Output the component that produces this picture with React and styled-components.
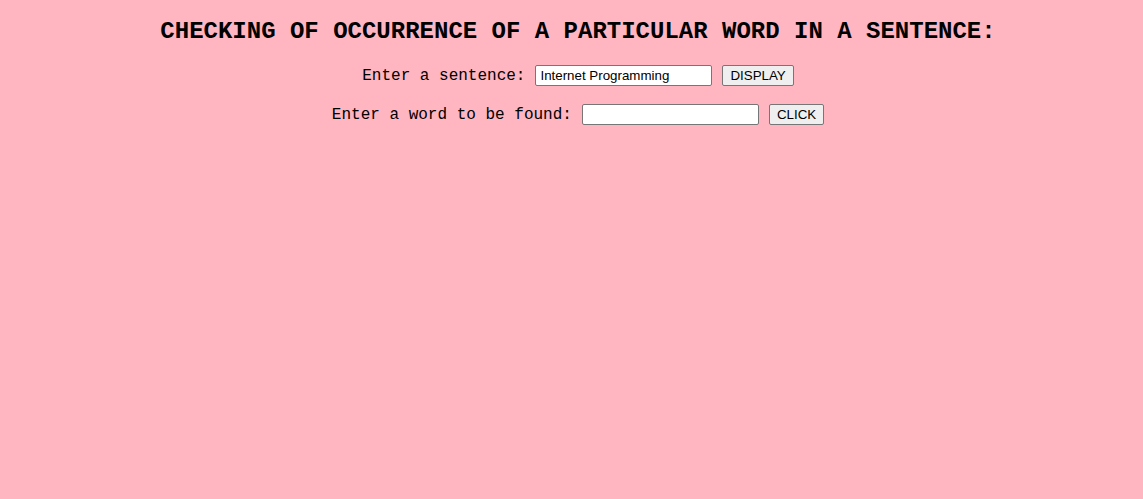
import React from 'react';
import styled, { createGlobalStyle } from 'styled-components';

const GlobalStyle = createGlobalStyle`
  html, body {
    margin: 0;
    background-color: #ffb6c1;
  }
`;

// Page layout
const Page = styled.div`
  display: flex;
  flex-direction: column;
  align-items: center;
  padding: 18px 0 0 13px;
  font-family: "Liberation Mono", "Courier New", monospace;
`;

const Title = styled.h2`
  margin: 0 0 20px;
  font-size: 24px;
  font-weight: bold;
  color: #000;
`;

const Row = styled.div`
  display: flex;
  align-items: center;
  gap: 10px;
  height: 21px;
  margin-bottom: ${({ last }) => (last ? '0' : '18px')};
`;

const Label = styled.label`
  font-size: 16px;
  color: #000;
`;

const TextInput = styled.input`
  box-sizing: border-box;
  width: 177px;
  height: 21px;
  padding: 1px 4px;
  border: 1px solid #767676;
  border-radius: 2px;
  background: #fff;
  font-family: "Liberation Sans", Arial, sans-serif;
  font-size: 13.33px;
  color: #000;
`;

const Button = styled.button`
  box-sizing: border-box;
  height: 21px;
  padding: 1px 7px;
  border: 1px solid #767676;
  border-radius: 2px;
  background: #efefef;
  font-family: "Liberation Sans", Arial, sans-serif;
  font-size: 13.33px;
  color: #000;
  cursor: pointer;
`;

const App = () => {
  return (
    <>
      <GlobalStyle />
      <Page>
        <Title>CHECKING OF OCCURRENCE OF A PARTICULAR WORD IN A SENTENCE:</Title>
        <Row>
          <Label>Enter a sentence:</Label>
          <TextInput defaultValue="Internet Programming" />
          <Button>DISPLAY</Button>
        </Row>
        <Row last>
          <Label>Enter a word to be found:</Label>
          <TextInput />
          <Button>CLICK</Button>
        </Row>
      </Page>
    </>
  );
};

export default App;
